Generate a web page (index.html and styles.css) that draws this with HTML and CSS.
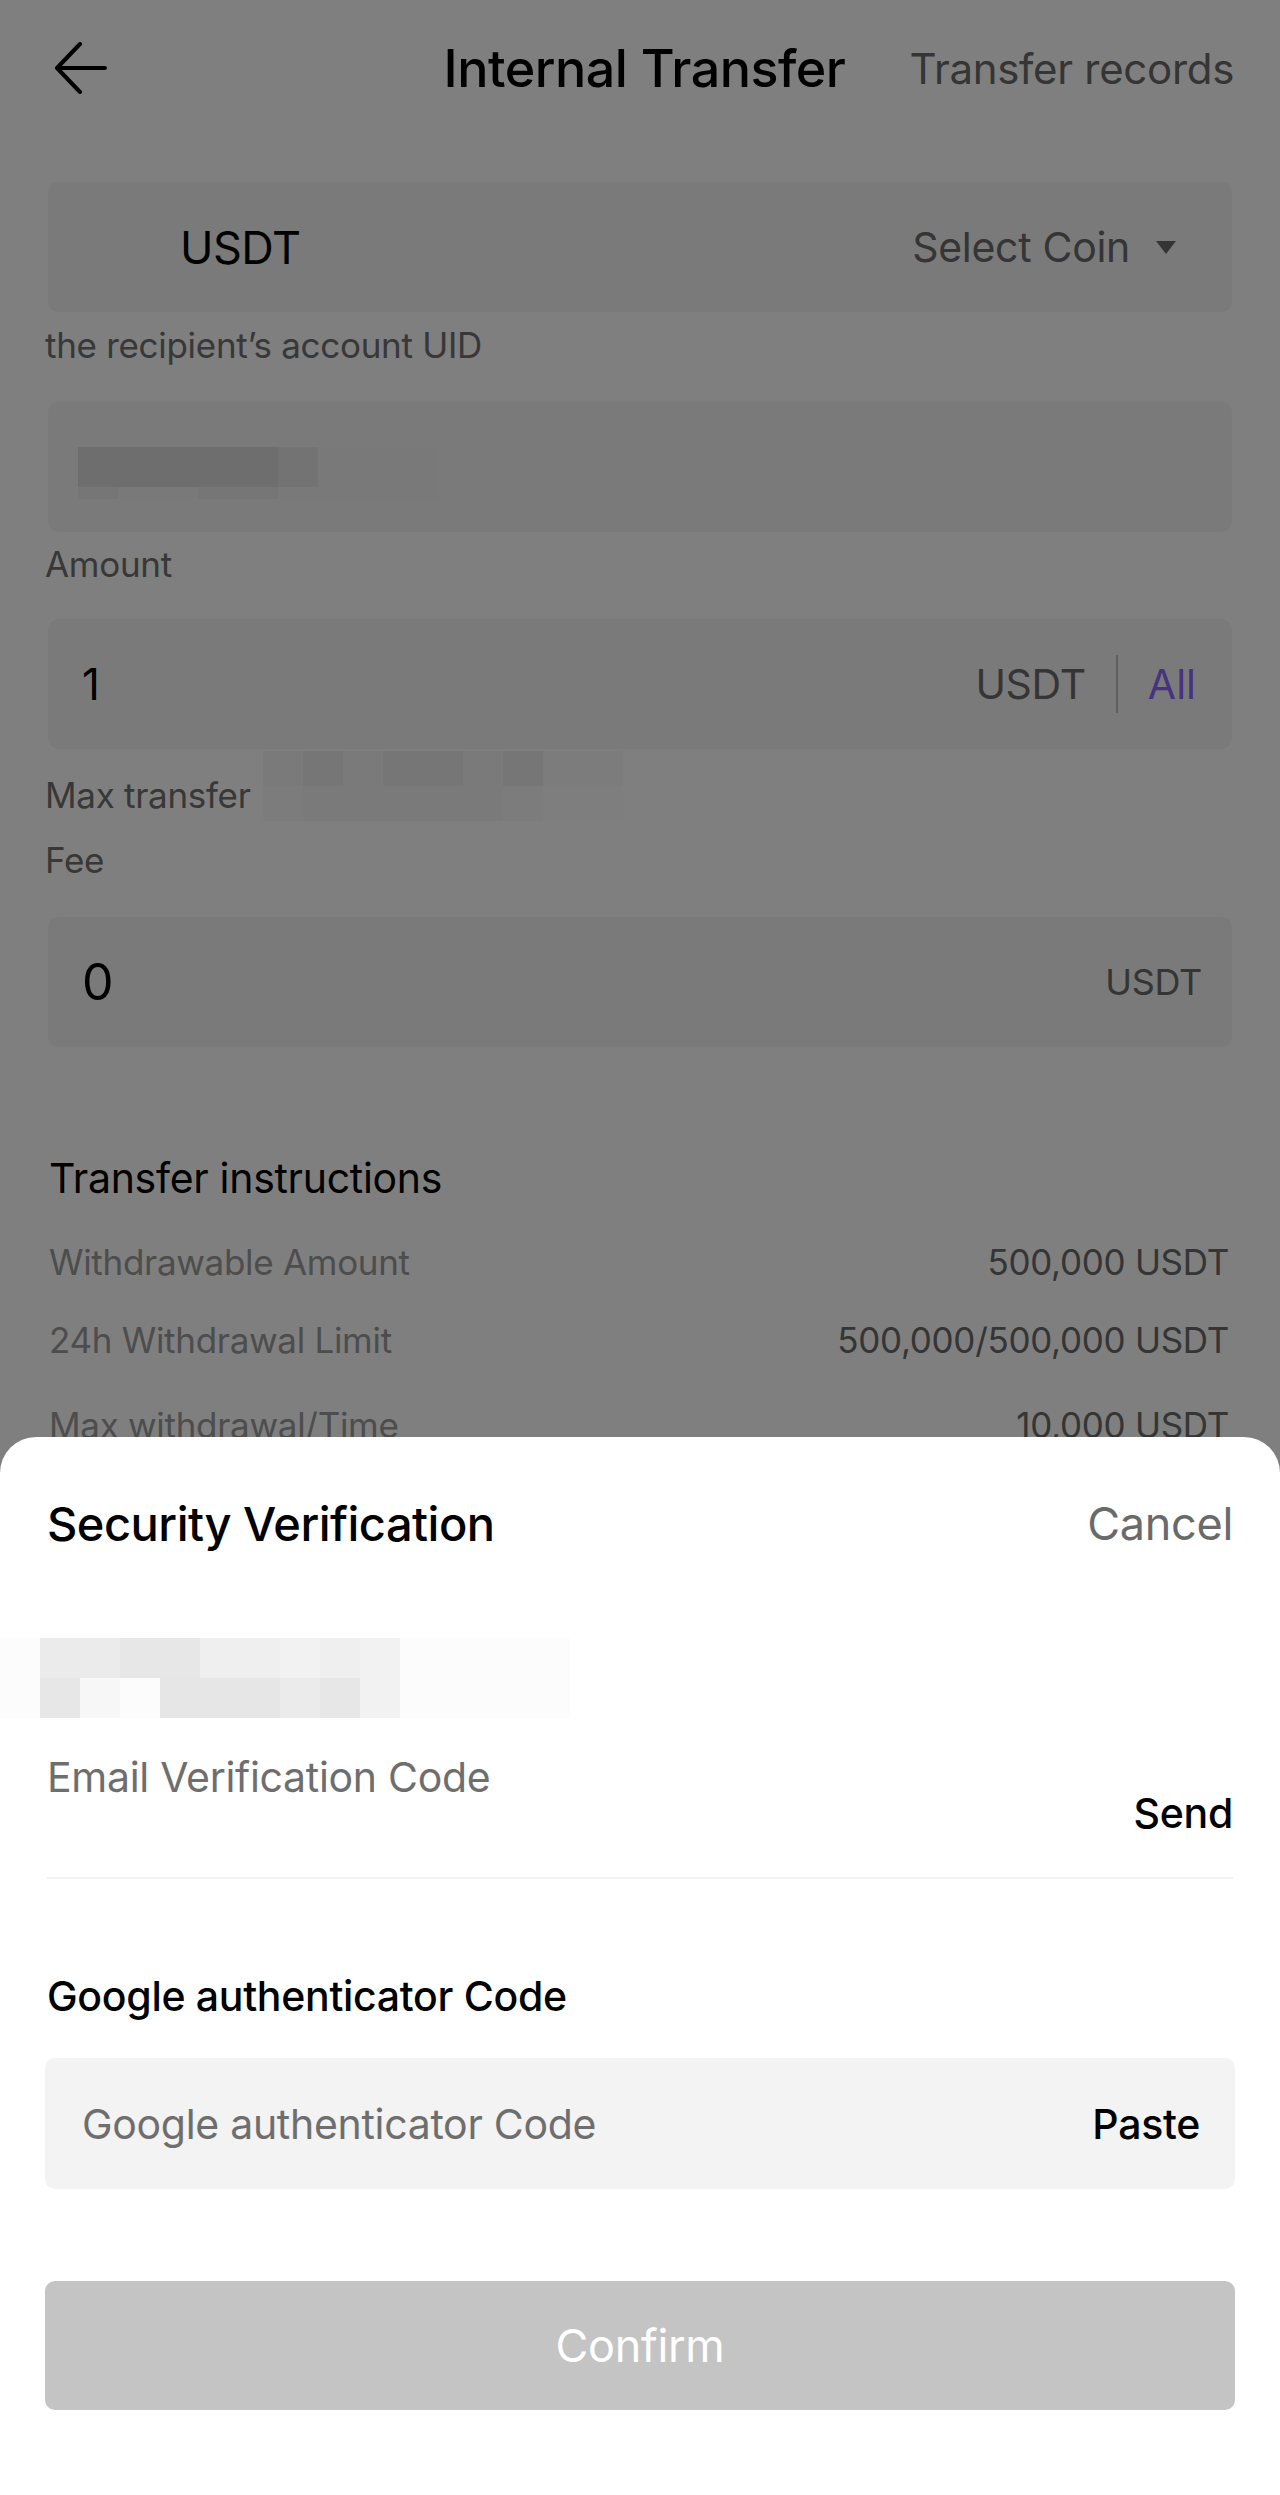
FILE: index.html
```html
<!DOCTYPE html>
<html lang="en">
<head>
<meta charset="utf-8">
<title>Internal Transfer</title>
<link rel="stylesheet" href="styles.css">
</head>
<body>
<div class="page">
  <header class="topbar">
    <span class="back" aria-label="Back">
      <svg width="52" height="52" viewBox="0 0 52 52"><path d="M25 2 L2 26 L25 50 M2 26 H50" fill="none" stroke="#000" stroke-width="4" stroke-linecap="round" stroke-linejoin="round"/></svg>
    </span>
    <h1 class="title">Internal Transfer</h1>
    <a class="records">Transfer records</a>
  </header>

  <div class="box coin-box">
    <span class="coin">USDT</span>
    <span class="select">Select Coin <span class="caret"></span></span>
  </div>

  <div class="label l-uid">the recipient’s account UID</div>
  <div class="box uid-box">
    <div class="mosaic m-uid">
      <span class="cell d1"></span><span class="cell d1"></span><span class="cell d1"></span><span class="cell d1"></span><span class="cell d1"></span><span class="cell d2"></span><span class="cell d4"></span><span class="cell d4"></span><span class="cell d4"></span>
      <span class="cell d3"></span><span class="cell d4"></span><span class="cell d4"></span><span class="cell d3"></span><span class="cell d3"></span><span class="cell d4"></span><span class="cell d4"></span><span class="cell d4"></span><span class="cell d4"></span>
    </div>
  </div>

  <div class="label l-amount">Amount</div>
  <div class="box amount-box">
    <span class="val">1</span>
    <span class="unit">USDT</span>
    <span class="vsep"></span>
    <span class="all">All</span>
  </div>

  <div class="label l-max">Max transfer
    <div class="mosaic m-max">
      <span class="cell e2"></span><span class="cell e1"></span><span class="cell e2"></span><span class="cell e1"></span><span class="cell e1"></span><span class="cell e2"></span><span class="cell e1"></span><span class="cell e3"></span><span class="cell e3"></span>
      <span class="cell e3"></span><span class="cell e2"></span><span class="cell e2"></span><span class="cell e2"></span><span class="cell e2"></span><span class="cell e2"></span><span class="cell e3"></span><span class="cell e4"></span><span class="cell e4"></span>
    </div>
  </div>
  <div class="label l-fee">Fee</div>
  <div class="box fee-box">
    <span class="val big">0</span>
    <span class="unit small">USDT</span>
  </div>

  <section class="instructions">
    <h2 class="ins-title">Transfer instructions</h2>
    <div class="row"><span class="k">Withdrawable Amount</span><span class="v">500,000 USDT</span></div>
    <div class="row"><span class="k">24h Withdrawal Limit</span><span class="v">500,000/500,000 USDT</span></div>
    <div class="row last"><span class="k">Max withdrawal/Time</span><span class="v">10,000 USDT</span></div>
  </section>
</div>

<div class="dim"></div>

<div class="sheet">
  <div class="sheet-head">
    <span class="sheet-title">Security Verification</span>
    <span class="cancel">Cancel</span>
  </div>
  <div class="mosaic m-mail">
    <span class="cell w0"></span><span class="cell w3"></span><span class="cell w3"></span><span class="cell w4"></span><span class="cell w4"></span><span class="cell w2"></span><span class="cell w2"></span><span class="cell w1"></span><span class="cell w2"></span><span class="cell w1"></span><span class="cell w0 wide"></span>
    <span class="cell w0"></span><span class="cell w4"></span><span class="cell wl"></span><span class="cell w0"></span><span class="cell w5"></span><span class="cell w5"></span><span class="cell w5"></span><span class="cell w3"></span><span class="cell w4"></span><span class="cell w1"></span><span class="cell w0 wide"></span>
  </div>
  <div class="email-row">
    <span class="ph">Email Verification Code</span>
    <span class="send">Send</span>
  </div>
  <div class="g-title">Google authenticator Code</div>
  <div class="g-input">
    <span class="ph">Google authenticator Code</span>
    <span class="paste">Paste</span>
  </div>
  <div class="confirm">Confirm</div>
</div>
</body>
</html>
```

FILE: styles.css
```css
* { box-sizing: border-box; margin: 0; padding: 0; }
html, body { width: 1280px; height: 2495px; }
body {
  background: #fff;
  font-family: Inter, "Liberation Sans", sans-serif;
  color: #000;
  overflow: hidden;
  position: relative;
}
.page { width: 1280px; }

.topbar {
  height: 136px;
  display: grid;
  grid-template-columns: 1fr auto 1fr;
  align-items: center;
  padding: 0 46px 0 55px;
}
.back { display: flex; align-items: center; }
.title { font-size: 52px; font-weight: 500; letter-spacing: -0.5px; }
.records { justify-self: end; font-size: 42px; color: #6a6a6a; letter-spacing: -0.3px; }

.box {
  margin: 0 48px;
  height: 130px;
  background: #f5f5f5;
  border-radius: 10px;
  display: flex;
  align-items: center;
}
.coin-box { margin-top: 46px; padding: 0 56px 0 132px; justify-content: space-between; }
.coin { font-size: 45px; letter-spacing: -0.5px; }
.select { font-size: 41px; color: #6a6a6a; display: flex; align-items: center; letter-spacing: -0.3px; }
.caret {
  margin-left: 26px;
  width: 0; height: 0;
  border-left: 10px solid transparent;
  border-right: 10px solid transparent;
  border-top: 13px solid #6a6a6a;
}

.label {
  padding-left: 45px;
  font-size: 35px;
  line-height: 48px;
  height: 48px;
  color: #707070;
  letter-spacing: -0.3px;
}
.l-uid { margin-top: 9px; margin-bottom: 33px; }
.l-amount { margin-top: 8px; margin-bottom: 31px; }
.l-max { margin-top: 22px; position: relative; }
.l-fee { margin-top: 17px; margin-bottom: 33px; }

.uid-box { padding-left: 30px; }
.mosaic { display: grid; }
.m-uid { grid-template-columns: repeat(9, 40px); grid-template-rows: 40px 12px; margin-top: 12px; }
.d1 { background: #dcdcdc; }
.d2 { background: #e6e6e6; }
.d3 { background: #ececec; }
.d4 { background: #f2f2f2; }

.amount-box { padding: 0 36px 0 34px; }
.val { font-size: 44px; flex: 1; }
.val.big { font-size: 50px; }
.unit { font-size: 41px; color: #6a6a6a; letter-spacing: -0.3px; }
.unit.small { font-size: 36px; }
.vsep { width: 2px; height: 58px; background: #bdbdbd; margin: 0 30px 0 30px; }
.all { font-size: 41px; color: #8c66ff; }

.m-max {
  position: absolute;
  left: 263px;
  top: -20px;
  grid-template-columns: repeat(9, 40px);
  grid-auto-rows: 35px;
  opacity: 0.9;
}
.e1 { background: #ececec; }
.e2 { background: #f3f3f3; }
.e3 { background: #f8f8f8; }
.e4 { background: #fcfcfc; }

.fee-box { padding: 0 30px 0 34px; }

.instructions { padding: 0 51px 0 49px; }
.ins-title { font-size: 41px; font-weight: 400; line-height: 56px; margin-top: 103px; letter-spacing: -0.3px; }
.row {
  display: flex;
  justify-content: space-between;
  font-size: 35px;
  line-height: 48px;
  margin-top: 30px;
  letter-spacing: -0.3px;
}
.row:first-of-type { margin-top: 32px; }
.row.last { margin-top: 37px; }
.row .k { color: #9a9a9a; }
.row .v { color: #6a6a6a; }

.dim {
  position: absolute;
  inset: 0;
  background: rgba(0, 0, 0, 0.5);
}

.sheet {
  position: absolute;
  left: 0;
  top: 1437px;
  width: 1280px;
  height: 1058px;
  background: #fff;
  border-radius: 36px 36px 0 0;
  padding: 56px 47px 0 47px;
}
.sheet-head {
  height: 60px;
  display: flex;
  justify-content: space-between;
  align-items: center;
}
.sheet-title { font-size: 47px; font-weight: 500; letter-spacing: -0.5px; }
.cancel { font-size: 45px; color: #6a6a6a; letter-spacing: -0.3px; }

.m-mail {
  margin: 85px 0 0 -47px;
  grid-template-columns: repeat(10, 40px) 170px;
  grid-auto-rows: 40px;
  width: 570px;
}
.w0 { background: #fcfcfc; }
.w1 { background: #f2f2f2; }
.w2 { background: #efefef; }
.w3 { background: #ebebeb; }
.w4 { background: #e7e7e7; }
.w5 { background: #e6e6e6; }
.wl { background: #f7f7f7; }

.email-row {
  margin-top: 31px;
  display: flex;
  justify-content: space-between;
  align-items: flex-start;
  padding-bottom: 36px;
  border-bottom: 2px solid #f2f2f2;
}
.ph { font-size: 41px; line-height: 56px; color: #6e6e6e; letter-spacing: -0.3px; }
.send { font-size: 41px; line-height: 56px; font-weight: 500; margin-top: 36px; letter-spacing: -0.3px; }

.g-title { margin-top: 89px; font-size: 41px; line-height: 56px; font-weight: 500; letter-spacing: -0.3px; }
.g-input {
  margin-top: 34px;
  margin-left: -2px;
  margin-right: -2px;
  height: 131px;
  background: #f3f3f3;
  border-radius: 10px;
  display: flex;
  justify-content: space-between;
  align-items: center;
  padding: 0 35px 0 37px;
}
.paste { font-size: 41px; font-weight: 500; letter-spacing: -0.3px; }

.confirm {
  margin: 92px -2px 0 -2px;
  height: 129px;
  background: #c4c4c4;
  border-radius: 10px;
  color: #fff;
  font-size: 45px;
  display: flex;
  align-items: center;
  justify-content: center;
  letter-spacing: -0.3px;
}
```
